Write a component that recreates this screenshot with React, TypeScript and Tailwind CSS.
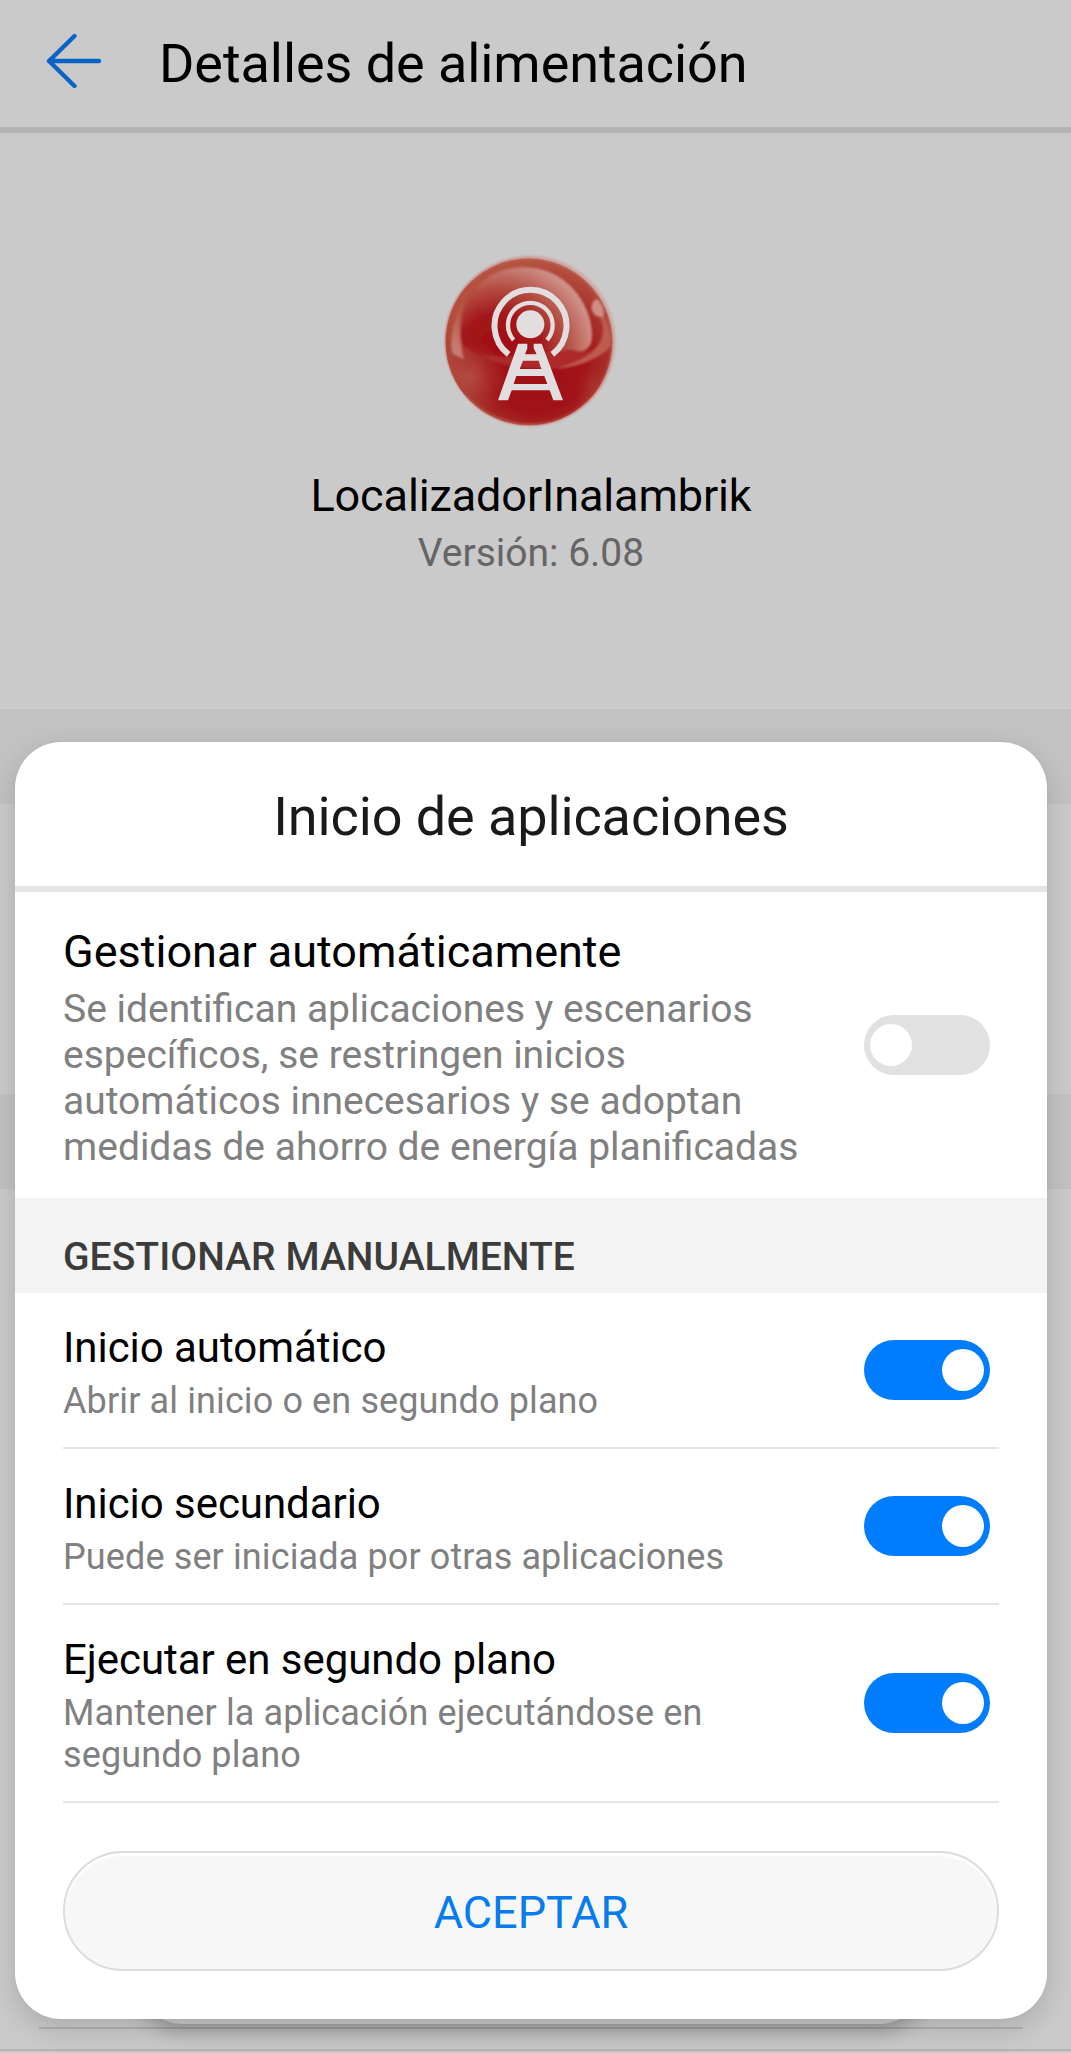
import { useState } from 'react';

const manualOptions = [
  {
    key: 'auto',
    title: 'Inicio automático',
    description: 'Abrir al inicio o en segundo plano',
  },
  {
    key: 'secondary',
    title: 'Inicio secundario',
    description: 'Puede ser iniciada por otras aplicaciones',
  },
  {
    key: 'background',
    title: 'Ejecutar en segundo plano',
    description: 'Mantener la aplicación ejecutándose en segundo plano',
  },
] as const;

interface ToggleProps {
  checked: boolean;
  label: string;
  onChange: () => void;
}

function Toggle({ checked, label, onChange }: ToggleProps) {
  return (
    <button
      role="switch"
      aria-checked={checked}
      aria-label={label}
      onClick={onChange}
      className={`flex h-[60px] w-[126px] shrink-0 items-center rounded-full px-1.5
        ${checked ? 'justify-end bg-[#007dff]' : 'justify-start bg-[#e1e1e1]'}`}
    >
      <span className="size-[42px] rounded-full bg-white" />
    </button>
  );
}

function AppIcon() {
  return (
    <svg viewBox="0 0 660 600" className="mt-[107px] -ml-0.5 h-[200px] w-[220px]">
      <defs>
        <radialGradient id="ball" gradientUnits="userSpaceOnUse" cx="350" cy="370" r="300">
          <stop offset="0" stopColor="#a00d14" />
          <stop offset="0.5" stopColor="#a11318" />
          <stop offset="0.8" stopColor="#aa3a30" />
          <stop offset="1" stopColor="#b5523f" />
        </radialGradient>
        <radialGradient id="dome" gradientUnits="userSpaceOnUse" cx="240" cy="345" r="290">
          <stop offset="0" stopColor="#a20c14" />
          <stop offset="0.42" stopColor="#a3151a" />
          <stop offset="0.68" stopColor="#b24a3e" />
          <stop offset="1" stopColor="#d0938b" />
        </radialGradient>
        <radialGradient id="glow" cx="0.5" cy="0.5" r="0.5">
          <stop offset="0" stopColor="#b8584a" stopOpacity="0.75" />
          <stop offset="1" stopColor="#b04238" stopOpacity="0" />
        </radialGradient>
        <linearGradient id="shine" x1="0" y1="0" x2="0" y2="1">
          <stop offset="0" stopColor="#c2705f" stopOpacity="0.2" />
          <stop offset="1" stopColor="#d0918a" />
        </linearGradient>
        <linearGradient id="rim" x1="0.9" y1="0" x2="0.1" y2="1">
          <stop offset="0" stopColor="#d0aaa5" />
          <stop offset="0.5" stopColor="#b4473c" />
          <stop offset="1" stopColor="#b04a3a" />
        </linearGradient>
        <filter id="soft">
          <feGaussianBlur stdDeviation="3" />
        </filter>
        <clipPath id="ballClip">
          <circle cx="328" cy="304" r="252" />
        </clipPath>
      </defs>

      <circle cx="331" cy="302" r="256" fill="#ceaca8" opacity="0.8" filter="url(#soft)" />
      <circle cx="327" cy="305" r="250" fill="url(#ball)" />
      <g clipPath="url(#ballClip)" filter="url(#soft)">
        <path d="M122 300C120 170 190 82 310 82C440 82 512 190 516 280C518 325 495 340 465 332C420 322 400 355 400 386C240 378 170 350 132 318Z" fill="url(#dome)" />
        <path d="M574 315C555 345 480 386 380 386C310 386 240 378 180 345C300 360 380 330 465 332C510 338 525 330 538 310C555 280 550 250 540 235L552 228C566 250 575 280 574 315Z" fill="#ac2c29" />
        <path d="M574 315C555 345 490 380 410 386C470 366 515 350 538 310C555 280 550 250 540 235L552 228C566 250 575 280 574 315Z" fill="#bd5b4d" />
        <path d="M136 175C105 215 85 300 98 342L132 358C115 290 115 230 136 175Z" fill="url(#shine)" />
        <ellipse cx="150" cy="410" rx="115" ry="110" fill="url(#glow)" />
        <ellipse cx="520" cy="440" rx="60" ry="90" fill="url(#glow)" opacity="0.4" />
        <path d="M524 180C515 190 512 203 518 215C524 228 540 235 552 228C553 210 545 188 532 178Z" fill="#d08e86" />
        <path d="M130 460C210 550 330 572 430 536C340 590 190 580 130 480Z" fill="#c0705a" opacity="0.8" />
      </g>
      <circle cx="328" cy="304" r="249" fill="none" stroke="url(#rim)" strokeWidth="6" opacity="0.7" filter="url(#soft)" />

      {/* Antenna */}
      <g fill="none" stroke="#e2dedf">
        <path d="M266 343A108 108 0 1 1 397 343" strokeWidth="18" />
        <path d="M281 300A67 67 0 1 1 381 300" strokeWidth="13" />
      </g>
      <circle cx="331" cy="253" r="42" fill="#e2dedf" />
      <path
        fill="#e2dedf"
        fillRule="evenodd"
        d="M294 311H322V325L315 343H350L341 325V311H365L429 481H400L389 451H275L264 481H234ZM309 362L299 387H364L356 362ZM289 408L281 432H382L373 408Z"
      />
    </svg>
  );
}

export default function App() {
  const [automatic, setAutomatic] = useState(false);
  const [manual, setManual] = useState<Record<string, boolean>>({
    auto: true,
    secondary: true,
    background: true,
  });

  return (
    <div className="relative flex h-[2053px] w-[1071px] flex-col overflow-hidden bg-[#cacaca] font-['Roboto',sans-serif] text-black">
      <header className="flex h-[133px] shrink-0 items-center border-b-6 border-[#b4b4b4] pl-[46px]">
        <svg
          viewBox="0 0 56 56"
          fill="none"
          stroke="#0b63c5"
          strokeWidth={4.4}
          strokeLinecap="round"
          strokeLinejoin="round"
          className="-mt-1.5 size-14"
        >
          <path d="M28.5 3L3 28L28.5 53M3 28H53" />
        </svg>
        <h1 className="ml-[57px] text-[54px] leading-[63px] tracking-[-0.07px]">Detalles de alimentación</h1>
      </header>

      <section className="flex h-[576px] shrink-0 flex-col items-center pr-[9px]">
        <AppIcon />
        <h2 className="mt-[29px] text-[45px] leading-[53px] tracking-[-0.12px]">LocalizadorInalambrik</h2>
        <p className="mt-2 text-[39px] leading-[46px] text-[#656565]">Versión: 6.08</p>
      </section>

      <div className="h-[95px] shrink-0 bg-[#c2c2c2]" />
      <div className="h-[290px] shrink-0" />
      <div className="h-[95px] shrink-0 bg-[#c2c2c2]" />
      <div className="flex flex-1 flex-col justify-end pb-0.5">
        <div className="mr-12 mb-5 ml-[39px] h-0.5 bg-[#b1b1b1]" />
        <div className="h-0.5 bg-[#b4b4b4]" />
      </div>

      {/* Sheet left underneath the dialog */}
      <div className="absolute top-[1900px] left-[137px] h-[124px] w-[788px] rounded-[46px] bg-[#c8c8c8] shadow-[0_6px_20px_rgba(0,0,0,0.27)]" />

      <div
        role="dialog"
        aria-label="Inicio de aplicaciones"
        className="absolute top-[742px] left-[15px] flex h-[1277px] w-[1032px] flex-col overflow-hidden rounded-[46px] bg-white shadow-[0_10px_28px_rgba(0,0,0,0.15),0_0_2px_rgba(0,0,0,0.06)]"
      >
        <h2 className="h-[150px] shrink-0 border-b-6 border-[#e5e5e5] pt-[43px] text-center text-[54px] leading-[63px] tracking-[-0.1px] text-[#1a1a1a]">
          Inicio de aplicaciones
        </h2>

        <div className="flex h-[306px] shrink-0 items-center justify-between pr-[57px] pl-12">
          <div className="w-[760px] pt-[5px]">
            <h3 className="text-[45px] leading-[53px]">Gestionar automáticamente</h3>
            <p className="mt-2 text-[39px] leading-[46px] text-[#808080]">
              Se identifican aplicaciones y escenarios específicos, se restringen inicios automáticos
              innecesarios y se adoptan medidas de ahorro de energía planificadas
            </p>
          </div>
          <Toggle
            checked={automatic}
            label="Gestionar automáticamente"
            onChange={() => setAutomatic(!automatic)}
          />
        </div>

        <h3 className="h-[95px] shrink-0 bg-[#f3f3f3] pt-9 pl-12 text-[39px] leading-[46px] font-medium tracking-[0.04px] text-[#3b3b3b]">
          GESTIONAR MANUALMENTE
        </h3>

        {manualOptions.map((option) => (
          <div
            key={option.key}
            className="mx-12 flex shrink-0 items-center justify-between border-b-2 border-[#e5e5e5] pr-[9px]"
          >
            <div className="w-[700px] pt-[30px] pb-[25px]">
              <h4 className="text-[42px] leading-[49px] tracking-[-0.05px]">{option.title}</h4>
              <p className="mt-2 text-[36px] leading-[42px] tracking-[0.12px] text-[#808080]">
                {option.description}
              </p>
            </div>
            <Toggle
              checked={manual[option.key]}
              label={option.title}
              onChange={() => setManual({ ...manual, [option.key]: !manual[option.key] })}
            />
          </div>
        ))}

        <button className="mx-12 mt-12 h-[120px] shrink-0 rounded-full border-2 border-[#dcdcdc] bg-[#f7f7f7] pt-[3px] text-[45px] text-[#067cee] shadow-[inset_0_3px_2px_#fff]">
          ACEPTAR
        </button>
      </div>
    </div>
  );
}
